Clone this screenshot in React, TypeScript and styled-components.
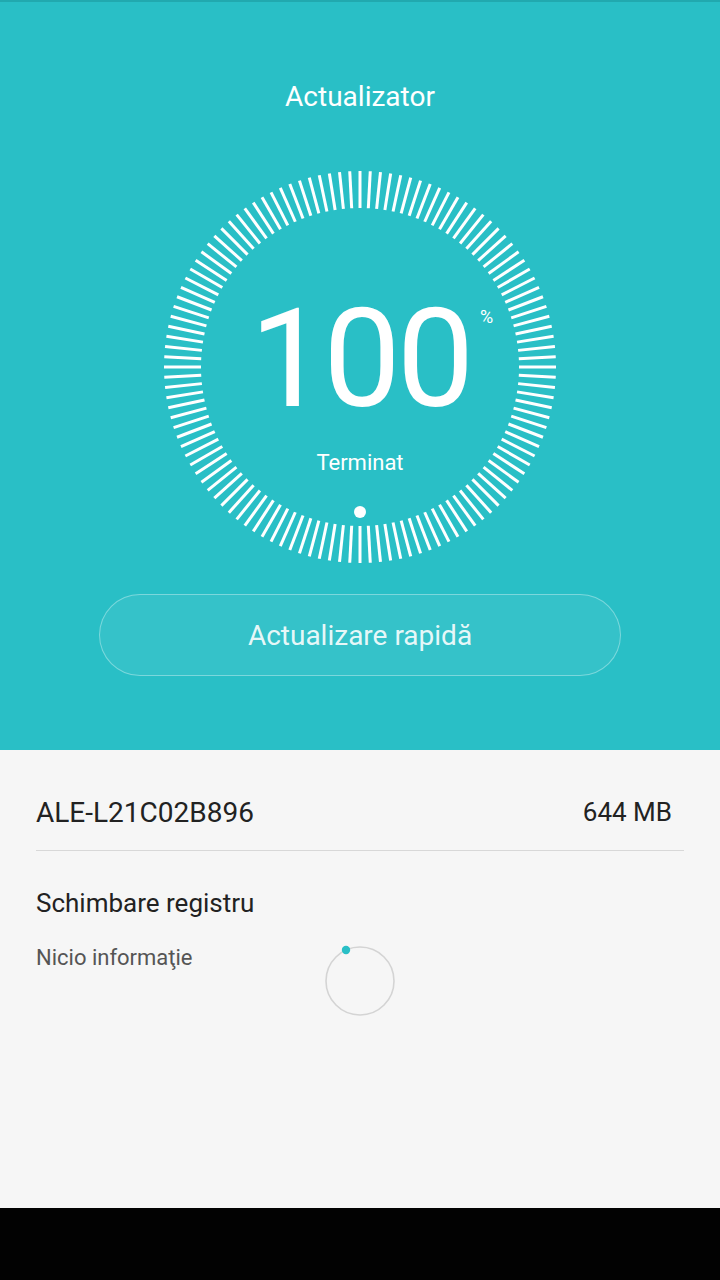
import React from "react";
import styled, { createGlobalStyle } from "styled-components";

const GlobalStyle = createGlobalStyle`
  html, body { margin: 0; padding: 0; }
  body { font-family: Roboto, "Noto Sans", sans-serif; background: #f6f6f6; }
  * { box-sizing: border-box; }
`;

const Page = styled.div`
  width: 720px;
  height: 1280px;
  display: flex;
  flex-direction: column;
  overflow: hidden;
`;

const Header = styled.header`
  height: 750px;
  background: #29bfc6;
  border-top: 2px solid #21a9af;
  display: flex;
  flex-direction: column;
  align-items: center;
  padding-top: 79px;
`;

const Title = styled.h1`
  margin: 0;
  font-weight: 400;
  font-size: 28px;
  line-height: 32px;
  color: #ffffff;
`;

const Dial = styled.div`
  position: relative;
  width: 400px;
  height: 400px;
  margin-top: 54px;
`;

const DialSvg = styled.svg`
  display: block;
  width: 400px;
  height: 400px;
`;

const NumberText = styled.div`
  position: absolute;
  left: 0;
  right: 0;
  top: 123px;
  text-align: center;
  font-size: 138px;
  line-height: 138px;
  font-weight: 400;
  color: #ffffff;
  letter-spacing: -4px;
`;

const Percent = styled.span`
  position: absolute;
  left: 320px;
  top: 141px;
  font-size: 18px;
  line-height: 18px;
  color: #ffffff;
`;

const Status = styled.div`
  position: absolute;
  left: 0;
  right: 0;
  top: 283px;
  text-align: center;
  font-size: 22px;
  line-height: 26px;
  color: #ffffff;
`;

const QuickButton = styled.button`
  margin-top: 27px;
  width: 522px;
  height: 82px;
  border-radius: 41px;
  border: 1px solid rgba(255, 255, 255, 0.35);
  background: rgba(255, 255, 255, 0.06);
  color: rgba(255, 255, 255, 0.9);
  font-family: Roboto, "Noto Sans", sans-serif;
  font-size: 28px;
  font-weight: 400;
  padding: 0;
`;

const Content = styled.main`
  flex: 1;
  background: #f6f6f6;
  padding: 0 36px;
  display: flex;
  flex-direction: column;
`;

const InfoRow = styled.div`
  height: 101px;
  display: flex;
  align-items: center;
  justify-content: space-between;
  border-bottom: 1px solid #d8d8d8;
  padding-right: 12px;
  padding-top: 24px;
`;

const InfoText = styled.span<{ $size: number }>`
  font-size: ${(p) => p.$size}px;
  color: #222222;
`;

const SectionTitle = styled.div`
  margin-top: 37px;
  font-size: 26px;
  line-height: 30px;
  color: #222222;
`;

const SectionBody = styled.div`
  display: flex;
  align-items: flex-start;
  margin-top: 27px;
`;

const Muted = styled.span`
  font-size: 22px;
  line-height: 26px;
  color: #555555;
  width: 288px;
`;

const Spinner = styled.svg`
  display: block;
  margin-top: 0;
`;

const NavBar = styled.div`
  height: 72px;
  background: #020202;
`;

function Ticks() {
  const count = 120;
  const cx = 200;
  const cy = 200;
  const r1 = 159;
  const r2 = 196;
  const lines = [];
  for (let i = 0; i < count; i++) {
    const a = (i / count) * Math.PI * 2;
    const s = Math.sin(a);
    const c = -Math.cos(a);
    lines.push(
      <line
        key={i}
        x1={cx + r1 * s}
        y1={cy + r1 * c}
        x2={cx + r2 * s}
        y2={cy + r2 * c}
        stroke="#ffffff"
        strokeWidth={3}
      />
    );
  }
  return (
    <DialSvg viewBox="0 0 400 400">
      {lines}
      <circle cx={200} cy={345} r={6} fill="#ffffff" />
    </DialSvg>
  );
}

export default function App() {
  return (
    <>
      <GlobalStyle />
      <Page>
        <Header>
          <Title>Actualizator</Title>
          <Dial>
            <Ticks />
            <NumberText>100</NumberText>
            <Percent>%</Percent>
            <Status>Terminat</Status>
          </Dial>
          <QuickButton>Actualizare rapidă</QuickButton>
        </Header>
        <Content>
          <InfoRow>
            <InfoText $size={28}>ALE-L21C02B896</InfoText>
            <InfoText $size={26}>644 MB</InfoText>
          </InfoRow>
          <SectionTitle>Schimbare registru</SectionTitle>
          <SectionBody>
            <Muted>Nicio informaţie</Muted>
            <Spinner width="72" height="72" viewBox="0 0 72 72">
              <circle cx="36" cy="36" r="34" fill="none" stroke="#d4d4d4" strokeWidth="1.6" />
              <circle cx="22" cy="5" r="4.2" fill="#29bfc6" />
            </Spinner>
          </SectionBody>
        </Content>
        <NavBar />
      </Page>
    </>
  );
}
